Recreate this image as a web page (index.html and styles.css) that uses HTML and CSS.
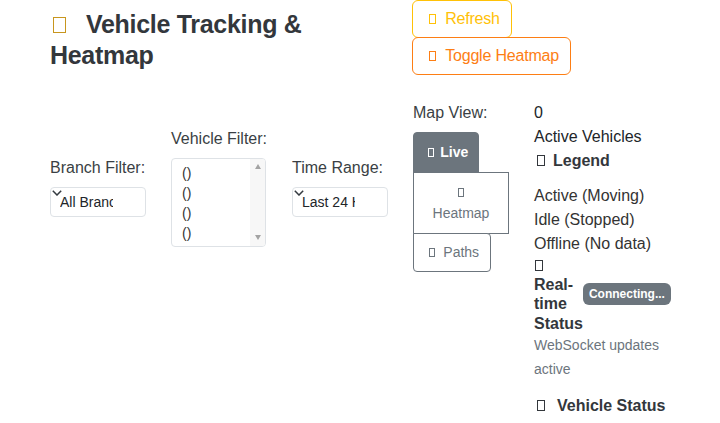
FILE: index.html
```html
<!DOCTYPE html>
<html lang="en">
<head>
<meta charset="utf-8">
<title>Vehicle Tracking &amp; Heatmap</title>
<link rel="stylesheet" href="styles.css">
</head>
<body>
<div class="page">
  <div class="header">
    <div class="title-col">
      <h2 class="title"><span class="ico ico-title"></span>Vehicle Tracking &amp; Heatmap</h2>
    </div>
    <div class="actions">
      <button class="btn btn-warn"><span class="ico"></span>Refresh</button>
      <button class="btn btn-orange"><span class="ico"></span>Toggle Heatmap</button>
    </div>
  </div>

  <div class="controls">
    <div class="filters">
      <div class="col">
        <label class="lbl" for="branch">Branch Filter:</label>
        <div class="select-wrap">
          <select class="select" id="branch">
            <option>All Branches</option>
          </select>
          <svg class="chev" width="10" height="6" viewBox="0 0 10 6"><path d="M0.8 0.8L5 5L9.2 0.8" fill="none" stroke="#343a40" stroke-width="1.5"/></svg>
        </div>
      </div>
      <div class="col">
        <label class="lbl">Vehicle Filter:</label>
        <div class="multi">
          <div class="options">
            <div class="opt">()</div>
            <div class="opt">()</div>
            <div class="opt">()</div>
            <div class="opt">()</div>
          </div>
          <div class="scrollbar">
            <span class="arrow-up"></span>
            <span class="arrow-down"></span>
          </div>
        </div>
      </div>
      <div class="col">
        <label class="lbl" for="range">Time Range:</label>
        <div class="select-wrap">
          <select class="select" id="range">
            <option>Last 24 Hours</option>
          </select>
          <svg class="chev" width="10" height="6" viewBox="0 0 10 6"><path d="M0.8 0.8L5 5L9.2 0.8" fill="none" stroke="#343a40" stroke-width="1.5"/></svg>
        </div>
      </div>
      <div class="col">
        <label class="lbl">Map View:</label>
        <div class="btn-group">
          <button class="vbtn vbtn-active"><span class="ico"></span>Live</button>
          <button class="vbtn vbtn-mid"><span class="ico ico-block"></span>Heatmap</button>
          <button class="vbtn vbtn-last"><span class="ico ico-wide"></span>Paths</button>
        </div>
      </div>
    </div>

    <div class="stats">
      <div class="line">0</div>
      <div class="line">Active Vehicles</div>
      <h6 class="sub sub-legend"><span class="ico ico-h"></span>Legend</h6>
      <div class="legend-item">Active (Moving)</div>
      <div class="legend-item">Idle (Stopped)</div>
      <div class="legend-item">Offline (No data)</div>
      <div class="rt-row">
        <h6 class="rt-title"><span class="ico ico-rt"></span>Real-time Status</h6>
        <span class="badge">Connecting...</span>
      </div>
      <p class="muted">WebSocket updates active</p>
      <h6 class="sub"><span class="ico ico-h2"></span>Vehicle Status</h6>
    </div>
  </div>
</div>
</body>
</html>
```

FILE: styles.css
```css
* { box-sizing: border-box; }

html, body {
  margin: 0;
  padding: 0;
  background: #ffffff;
}

body {
  font-family: "Liberation Sans", Arial, sans-serif;
  font-size: 16px;
  line-height: 24px;
  color: #212529;
}

.page {
  padding-left: 38px;
  width: 720px;
  overflow: hidden;
}

/* tofu boxes standing in for missing icon glyphs */
.ico {
  display: inline-block;
  width: 0.45em;
  height: 0.64em;
  border: 1px solid currentColor;
  margin: 0 0.55em 0 0.05em;
}

.header {
  display: flex;
  align-items: flex-start;
}

.title-col {
  width: 362px;
  padding: 0 12px;
}

.title {
  margin: 9px 0 0;
  font-size: 25px;
  line-height: 31px;
  font-weight: 700;
  letter-spacing: -0.3px;
  color: #33373c;
}

.ico-title {
  width: 13px;
  height: 16px;
  border: 1.5px solid #c8961e;
  margin: 0 20px 0 3px;
}

.actions {
  padding: 0 12px;
  display: flex;
  flex-direction: column;
  align-items: flex-start;
}

.btn {
  font-family: inherit;
  font-size: 16px;
  line-height: 24px;
  padding: 6px 11px 6px 15px;
  background: #ffffff;
  border: 1px solid;
  border-radius: 6px;
  white-space: nowrap;
  letter-spacing: -0.2px;
}

.btn .ico {
  margin: 0 9px 0 1px;
}

.btn-warn {
  color: #ffc107;
  border-color: #ffc107;
}

.btn-orange {
  color: #fd7e14;
  border-color: #fd7e14;
  margin-top: -1px;
}

.controls {
  display: flex;
  align-items: flex-start;
  margin-top: 26px;
}

.filters {
  display: flex;
  align-items: center;
}

.col {
  width: 121px;
  padding: 0 12px;
  display: flex;
  flex-direction: column;
  align-items: flex-start;
}

.lbl {
  display: block;
  color: #3a3f44;
  margin-bottom: 7px;
}

.select-wrap {
  position: relative;
  width: 96px;
}

.select {
  display: block;
  -webkit-appearance: none;
  appearance: none;
  width: 96px;
  height: 30px;
  border: 1px solid #dee2e6;
  border-radius: 4px;
  padding: 0 32px 0 9px;
  font-family: inherit;
  font-size: 14px;
  line-height: 28px;
  color: #212529;
  background: #ffffff;
  outline: none;
}

.chev {
  position: absolute;
  left: 2px;
  top: 3px;
  pointer-events: none;
}

.multi {
  display: flex;
  width: 95px;
  height: 89px;
  border: 1px solid #dee2e6;
  border-radius: 4px;
  overflow: hidden;
  background: #ffffff;
}

.options {
  flex: 1;
  padding: 4px 0 0 10px;
  font-size: 14px;
  line-height: 20px;
  color: #333333;
}

.scrollbar {
  width: 15px;
  background: #f7f7f7;
  display: flex;
  flex-direction: column;
  justify-content: space-between;
  align-items: center;
  padding: 5px 0 6px;
}

.arrow-up {
  width: 0;
  height: 0;
  border-left: 3.5px solid transparent;
  border-right: 3.5px solid transparent;
  border-bottom: 5px solid #a3a3a3;
}

.arrow-down {
  width: 0;
  height: 0;
  border-left: 3.5px solid transparent;
  border-right: 3.5px solid transparent;
  border-top: 5px solid #a3a3a3;
}

.btn-group {
  display: flex;
  flex-direction: column;
  align-items: flex-start;
}

.vbtn {
  font-family: inherit;
  font-size: 14px;
  line-height: 21px;
  padding: 9px 12px;
  background: #ffffff;
  color: #6c757d;
  border: 1px solid #6c757d;
  white-space: nowrap;
}

.vbtn .ico {
  margin: 0 6px 0 2px;
}

.vbtn-active {
  background: #6c757d;
  color: #ffffff;
  font-weight: 700;
  border-radius: 4px 4px 0 0;
  padding: 9px 10px 9px 12px;
}

.vbtn-mid {
  width: 96px;
  margin-top: -1px;
  border-radius: 0;
  text-align: center;
}

.vbtn .ico-block {
  display: block;
  width: 6px;
  height: 9px;
  margin: 6px auto;
}

.vbtn-last {
  margin-top: -1px;
  border-radius: 0 4px 4px 4px;
  padding: 8px 11px 8px 12px;
}

.vbtn .ico-wide {
  margin: 0 8px 0 3px;
}

.stats {
  width: 160px;
  padding: 0 12px;
}

.line {
  color: #212529;
}

.sub {
  margin: 0;
  font-size: 16px;
  line-height: 24px;
  font-weight: 700;
  color: #33373c;
}

.sub-legend {
  margin-bottom: 11px;
}

.ico-h {
  width: 8px;
  height: 11px;
  margin: 0 8px 0 3px;
}

.ico-h2 {
  width: 8px;
  height: 11px;
  margin: 0 12px 0 3px;
}

.legend-item {
  color: #333333;
}

.rt-row {
  display: flex;
  align-items: center;
  justify-content: space-between;
}

.rt-title {
  width: 49px;
  margin: 0;
  font-size: 16px;
  line-height: 19.2px;
  font-weight: 700;
  color: #33373c;
}

.ico-rt {
  width: 8px;
  height: 11px;
  margin: 0 6px 0 1px;
}

.badge {
  background: #6c757d;
  color: #ffffff;
  font-size: 12px;
  line-height: 12px;
  font-weight: 700;
  padding: 5px 6px;
  border-radius: 6px;
  white-space: nowrap;
}

.muted {
  margin: 0 0 13px;
  font-size: 14px;
  line-height: 24px;
  color: #6c757d;
}
```
